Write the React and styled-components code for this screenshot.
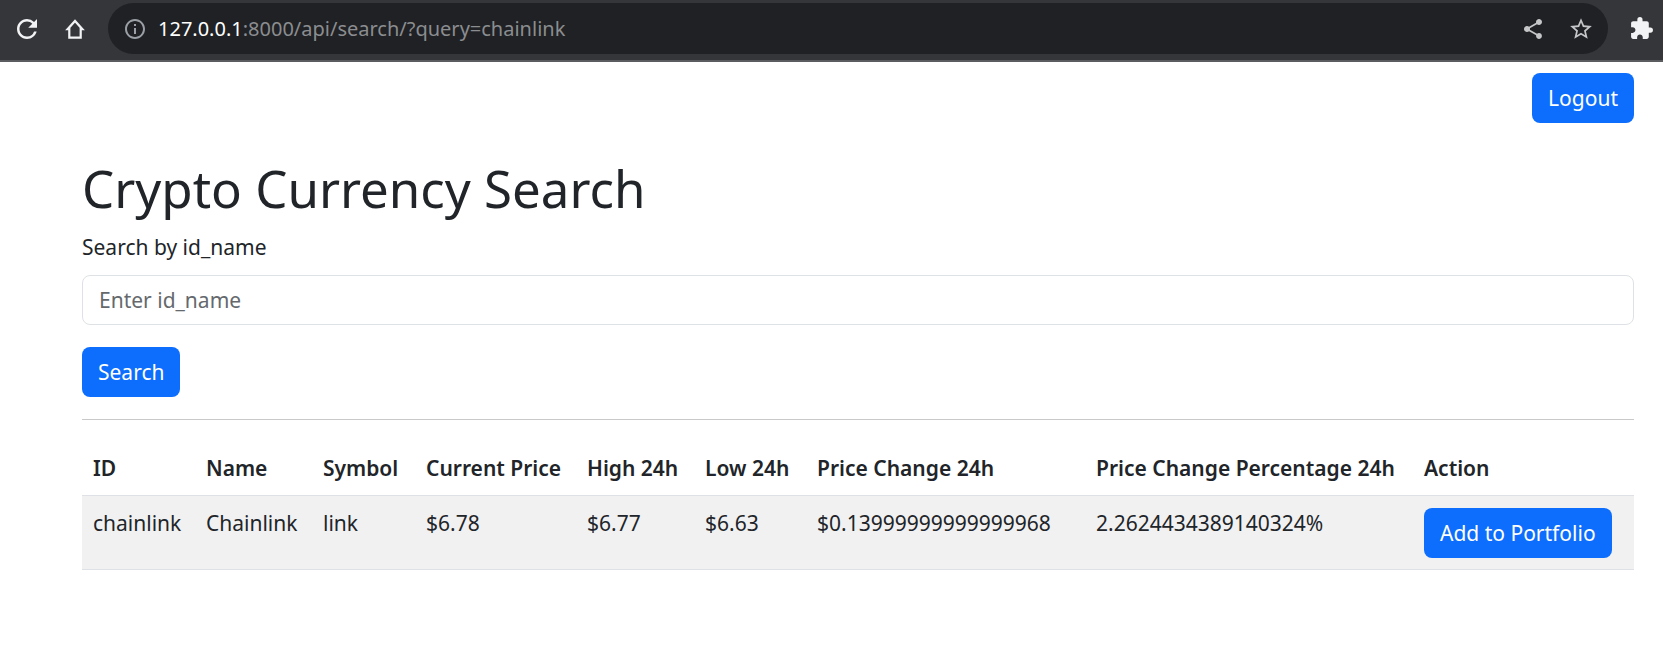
import React from "react";
import styled, { createGlobalStyle } from "styled-components";
import { MdShare, MdStarBorder, MdExtension, MdInfoOutline, MdRefresh } from "react-icons/md";

const GlobalStyle = createGlobalStyle`
  *, *::before, *::after { box-sizing: border-box; }
  body {
    margin: 0;
    background: #fff;
    color: #212529;
    font-family: "Noto Sans", "Liberation Sans", sans-serif;
    font-size: 21px;
    line-height: 31px;
  }
`;

const Toolbar = styled.header`
  display: flex;
  align-items: center;
  height: 62px;
  padding: 0 6px 3px 11px;
  background: #35363a;
  border-bottom: 2px solid #5b5c5f;
`;

const IconButton = styled.button`
  display: flex;
  align-items: center;
  justify-content: center;
  flex: none;
  width: ${(p) => p.$width || 32}px;
  height: 32px;
  padding: 0;
  border: 0;
  background: none;
  color: ${(p) => p.$color || "#f1f3f4"};
`;

const NavButtons = styled.nav`
  display: flex;
  gap: 16px;
  margin-right: 17px;
`;

const AddressBar = styled.div`
  display: flex;
  align-items: center;
  flex: 1;
  min-width: 0;
  height: 51px;
  margin-right: 17px;
  padding: 0 11px 0 15px;
  border-radius: 26px;
  background: #202124;
  color: #9aa0a6;
`;

const Address = styled.div`
  flex: 1;
  min-width: 0;
  margin-left: 11px;
  overflow: hidden;
  white-space: nowrap;
  font-size: 20px;
  color: #8b8d90;
`;

const Host = styled.span`
  color: #fff;
`;

const AddressActions = styled.div`
  display: flex;
  gap: 16px;
`;

const TopBar = styled.div`
  display: flex;
  justify-content: flex-end;
  padding: 11px 29px 0;
`;

const Button = styled.button`
  height: 50px;
  padding: 0 16px;
  border: 0;
  border-radius: 8px;
  background: #0d6efd;
  color: #fff;
  font: inherit;
  white-space: nowrap;
`;

const Main = styled.main`
  padding: 34px 29px 0 82px;
`;

const Title = styled.h1`
  margin: 0 0 12px;
  font-size: 51px;
  line-height: 63px;
  font-weight: 400;
`;

const SearchForm = styled.form`
  display: flex;
  flex-direction: column;
  align-items: flex-start;
`;

const Label = styled.label`
  margin-bottom: 12px;
`;

const TextInput = styled.input`
  width: 100%;
  height: 50px;
  margin-bottom: 22px;
  padding: 0 16px;
  border: 1px solid #dee2e6;
  border-radius: 8px;
  background: #fff;
  color: inherit;
  font: inherit;

  &::placeholder {
    color: #65696d;
    opacity: 1;
  }
`;

const Divider = styled.hr`
  margin: 22px 0 21px;
  border: 0;
  border-top: 1px solid #c8c9ca;
`;

const Table = styled.table`
  width: 100%;
  table-layout: fixed;
  border-collapse: collapse;
  text-align: left;
`;

const Col = styled.col`
  width: ${(p) => p.$width}px;
`;

const HeaderCell = styled.th`
  padding: 12px 0 11px 11px;
  border-bottom: 1px solid #dee2e6;
  font-weight: 600;
  white-space: nowrap;
`;

const Cell = styled.td`
  padding: 12px 0 11px 11px;
  border-bottom: 1px solid #dee2e6;
  background: #f1f1f2;
  vertical-align: top;
  white-space: nowrap;
`;

const columns = [
  { key: "id", title: "ID", width: 113 },
  { key: "name", title: "Name", width: 117 },
  { key: "symbol", title: "Symbol", width: 103 },
  { key: "price", title: "Current Price", width: 161 },
  { key: "high", title: "High 24h", width: 118 },
  { key: "low", title: "Low 24h", width: 112 },
  { key: "change", title: "Price Change 24h", width: 279 },
  { key: "percent", title: "Price Change Percentage 24h", width: 328 },
];

const coins = [
  {
    id: "chainlink",
    name: "Chainlink",
    symbol: "link",
    price: "$6.78",
    high: "$6.77",
    low: "$6.63",
    change: "$0.13999999999999968",
    percent: "2.2624434389140324%",
  },
];

function HomeIcon() {
  return (
    <svg width="20" height="20" viewBox="0 0 20 20" fill="none" stroke="currentColor" strokeWidth="2.2" aria-hidden="true">
      <path d="M2.6 10.2H4.3V18.7H15.7V10.2H17.4L10 2Z" strokeLinejoin="miter" />
    </svg>
  );
}

export default function App() {
  return (
    <>
      <GlobalStyle />
      <Toolbar>
        <NavButtons>
          <IconButton aria-label="Reload"><MdRefresh size={30} /></IconButton>
          <IconButton aria-label="Home"><HomeIcon /></IconButton>
        </NavButtons>
        <AddressBar>
          <IconButton $width={24} $color="#9aa0a6" aria-label="Site information"><MdInfoOutline size={24} /></IconButton>
          <Address><Host>127.0.0.1</Host>:8000/api/search/?query=chainlink</Address>
          <AddressActions>
            <IconButton $color="#c4c6c8" aria-label="Share"><MdShare size={24} /></IconButton>
            <IconButton $color="#c4c6c8" aria-label="Bookmark"><MdStarBorder size={26} /></IconButton>
          </AddressActions>
        </AddressBar>
        <IconButton aria-label="Extensions"><MdExtension size={25} /></IconButton>
      </Toolbar>
      <TopBar>
        <Button type="button">Logout</Button>
      </TopBar>
      <Main>
        <Title>Crypto Currency Search</Title>
        <SearchForm onSubmit={(e) => e.preventDefault()}>
          <Label htmlFor="query">Search by id_name</Label>
          <TextInput id="query" name="query" type="text" placeholder="Enter id_name" />
          <Button type="submit">Search</Button>
        </SearchForm>
        <Divider />
        <Table>
          <colgroup>
            {columns.map((c) => <Col key={c.key} $width={c.width} />)}
            <Col $width={221} />
          </colgroup>
          <thead>
            <tr>
              {columns.map((c) => <HeaderCell key={c.key} scope="col">{c.title}</HeaderCell>)}
              <HeaderCell scope="col">Action</HeaderCell>
            </tr>
          </thead>
          <tbody>
            {coins.map((coin) => (
              <tr key={coin.id}>
                {columns.map((c) => <Cell key={c.key}>{coin[c.key]}</Cell>)}
                <Cell><Button type="button">Add to Portfolio</Button></Cell>
              </tr>
            ))}
          </tbody>
        </Table>
      </Main>
    </>
  );
}
